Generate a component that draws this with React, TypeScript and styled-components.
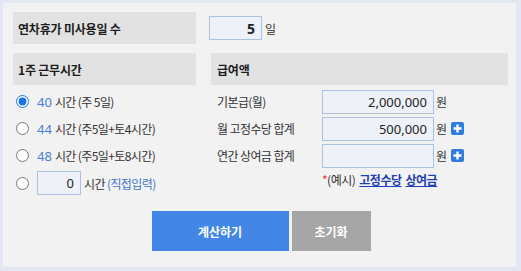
import React, { useState } from 'react'
import styled, { createGlobalStyle } from 'styled-components'

const GlobalStyle = createGlobalStyle`
	html, body {
		margin: 0;
		padding: 0;
		background: #e3e7f4;
	}
	body {
		font-family: 'Noto Sans CJK KR', 'Noto Sans', sans-serif;
		font-size: 12px;
		color: #222;
	}
`

const Panel = styled.div`
	margin: 3px 5px 4px 3px;
	height: 264px;
	box-sizing: border-box;
	background: #f2f2f2;
	padding: 9px 8px 0 10px;
`

const Grid = styled.div`
	display: grid;
	grid-template-columns: 183px 1fr;
	column-gap: 13px;
	row-gap: 9px;
`

const SectionHead = styled.div`
	height: 32px;
	display: flex;
	align-items: center;
	padding-left: 5px;
	background: #e2e2e2;
	font-weight: 700;
	font-size: 12px;
	letter-spacing: -0.2px;
	color: #1c1c1c;
`

const RightHead = styled(SectionHead)`
	margin-left: 2px;
	padding-left: 6px;
`

const Inline = styled.div`
	display: flex;
	align-items: center;
	gap: 3px;
`

const Field = styled.input<{ w: number; bold?: boolean }>`
	box-sizing: border-box;
	width: ${p => p.w}px;
	height: 24px;
	border: 1px solid #a9c3e2;
	background: #eef2f8;
	text-align: right;
	padding: 0 6px 0 4px;
	font-family: 'Noto Sans', sans-serif;
	font-size: ${p => (p.bold ? 14 : 13)}px;
	font-weight: ${p => (p.bold ? 700 : 400)};
	color: #222;
	outline: none;
`

const Unit = styled.span`
	font-size: 12px;
	color: #333;
`

const List = styled.div`
	display: flex;
	flex-direction: column;
	margin-top: -6px;
`

const RadioRow = styled.label<{ tall?: boolean }>`
	display: flex;
	align-items: center;
	height: ${p => (p.tall ? 28 : 27)}px;
	gap: 3px;
	font-size: 12px;
	color: #333;
	letter-spacing: -0.6px;
	cursor: pointer;
`

const Radio = styled.input`
	width: 13px;
	height: 13px;
	margin: 0 5px 0 3px;
	accent-color: #1a73e8;
`

const Hours = styled.span`
	color: #4a7fd2;
	font-family: 'Noto Sans', sans-serif;
	font-size: 13px;
	letter-spacing: 0;
`

const Link = styled.span`
	color: #3f76cc;
`

const FormRow = styled.div`
	display: grid;
	grid-template-columns: 103px 112px max-content max-content;
	align-items: center;
	column-gap: 2px;
	height: 27px;
	padding-left: 8px;
	font-size: 12px;
	color: #333;
	letter-spacing: -0.6px;
`

const PlusBtn = styled.button`
	width: 13px;
	height: 13px;
	margin-left: 3px;
	padding: 0;
	border: 0;
	border-radius: 2px;
	background: #2e7ce0;
	display: flex;
	align-items: center;
	justify-content: center;
	cursor: pointer;
`

const Note = styled.div`
	padding-left: 113px;
	height: 20px;
	display: flex;
	align-items: center;
	font-size: 12px;
	color: #333;
	letter-spacing: -0.5px;
`

const Star = styled.span`
	color: #e03030;
`

const NoteLink = styled.a`
	color: #1f3fb5;
	font-weight: 700;
	text-decoration: underline;
	margin-left: 4px;
`

const Buttons = styled.div`
	display: flex;
	justify-content: center;
	gap: 3px;
	margin-top: 14px;
	padding-left: 1px;
`

const Btn = styled.button<{ w: number; tone: 'blue' | 'gray' }>`
	width: ${p => p.w}px;
	height: 40px;
	border: 0;
	background: ${p => (p.tone === 'blue' ? '#4287e6' : '#a6a6a6')};
	color: #fff;
	font-family: 'Noto Sans CJK KR', sans-serif;
	font-weight: 700;
	font-size: 12px;
	cursor: pointer;
`

const Plus = () => (
	<svg width="9" height="9" viewBox="0 0 9 9">
		<path d="M3.3 0.5h2.4v2.8h2.8v2.4H5.7v2.8H3.3V5.7H0.5V3.3h2.8z" fill="#fff" />
	</svg>
)

const options = [
	{ h: '40', text: '시간 (주 5일)' },
	{ h: '44', text: '시간 (주5일+토4시간)' },
	{ h: '48', text: '시간 (주5일+토8시간)' },
]

function App() {
	const [sel, setSel] = useState(0)
	return (
		<>
			<GlobalStyle />
			<Panel>
				<Grid>
					<SectionHead>연차휴가 미사용일 수</SectionHead>
					<Inline>
						<Field w={53} bold defaultValue="5" />
						<Unit>일</Unit>
					</Inline>
					<SectionHead>1주 근무시간</SectionHead>
					<RightHead>급여액</RightHead>
					<List>
						{options.map((o, i) => (
							<RadioRow key={o.h}>
								<Radio type="radio" name="hours" checked={sel === i} onChange={() => setSel(i)} />
								<Hours>{o.h}</Hours>
								<span>{o.text}</span>
							</RadioRow>
						))}
						<RadioRow tall>
							<Radio type="radio" name="hours" checked={sel === 3} onChange={() => setSel(3)} />
							<Field w={44} defaultValue="0" />
							<span>
								시간 <Link>(직접입력)</Link>
							</span>
						</RadioRow>
					</List>
					<List>
						<FormRow>
							<span>기본급(월)</span>
							<Field w={112} defaultValue="2,000,000" />
							<Unit>원</Unit>
							<span />
						</FormRow>
						<FormRow>
							<span>월 고정수당 합계</span>
							<Field w={112} defaultValue="500,000" />
							<Unit>원</Unit>
							<PlusBtn aria-label="고정수당 추가">
								<Plus />
							</PlusBtn>
						</FormRow>
						<FormRow>
							<span>연간 상여금 합계</span>
							<Field w={112} defaultValue="" />
							<Unit>원</Unit>
							<PlusBtn aria-label="상여금 추가">
								<Plus />
							</PlusBtn>
						</FormRow>
						<Note>
							<Star>*</Star>(예시)
							<NoteLink>고정수당</NoteLink>
							<NoteLink>상여금</NoteLink>
						</Note>
					</List>
				</Grid>
				<Buttons>
					<Btn w={137} tone="blue">계산하기</Btn>
					<Btn w={79} tone="gray">초기화</Btn>
				</Buttons>
			</Panel>
		</>
	)
}

export default App
